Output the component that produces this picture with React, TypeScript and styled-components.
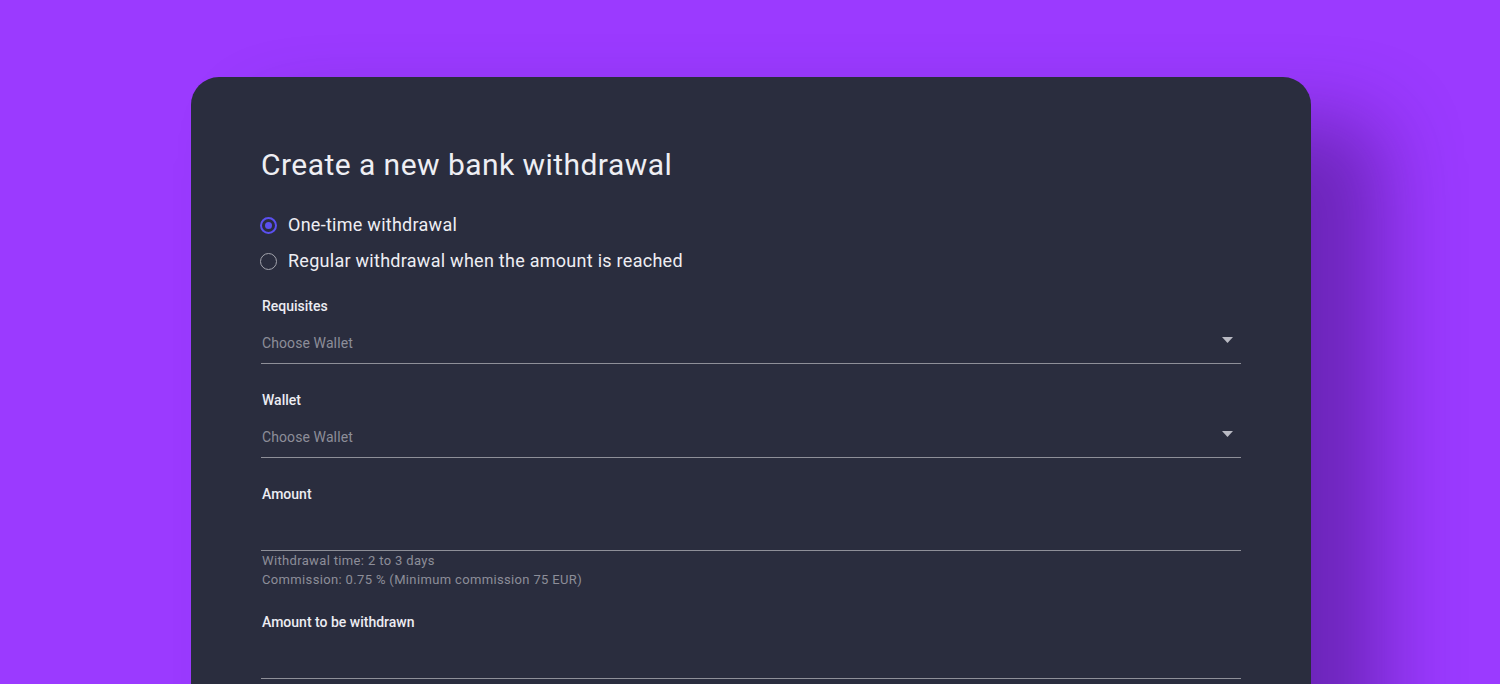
import React, { FC, useState } from "react";
import styled, { createGlobalStyle } from "styled-components";

const GlobalStyle = createGlobalStyle`
  html, body {
    margin: 0;
    padding: 0;
    background: #9b3aff;
  }
  body {
    font-family: Roboto, "Noto Sans", "Liberation Sans", sans-serif;
    -webkit-font-smoothing: antialiased;
  }
  * {
    box-sizing: border-box;
  }
`;

type Option = { id: string; label: string };

const withdrawalTypes: Option[] = [
  { id: "once", label: "One-time withdrawal" },
  { id: "regular", label: "Regular withdrawal when the amount is reached" },
];

const ArrowIcon: FC = () => (
  <svg width="11" height="6" viewBox="0 0 11 6" aria-hidden="true">
    <path d="M0 0h11L5.5 6z" fill="#b9bac3" />
  </svg>
);

const SelectField: FC<{ label: string; placeholder: string }> = ({ label, placeholder }) => (
  <StyledField>
    <StyledLabel>{label}</StyledLabel>
    <StyledSelect>
      <span>{placeholder}</span>
      <ArrowIcon />
    </StyledSelect>
  </StyledField>
);

const InputField: FC<{ label: string; helper?: string[] }> = ({ label, helper }) => (
  <StyledField>
    <StyledLabel>{label}</StyledLabel>
    <StyledInput type="text" />
    {helper && (
      <StyledHelper>
        {helper.map((line) => (
          <div key={line}>{line}</div>
        ))}
      </StyledHelper>
    )}
  </StyledField>
);

const App: FC = () => {
  const [type, setType] = useState("once");

  return (
    <>
      <GlobalStyle />
      <StyledPage>
        <StyledCard>
          <StyledTitle>Create a new bank withdrawal</StyledTitle>

          <StyledRadioGroup>
            {withdrawalTypes.map((option) => (
              <StyledRadioRow key={option.id}>
                <StyledRadio
                  type="radio"
                  name="withdrawal-type"
                  checked={type === option.id}
                  onChange={() => setType(option.id)}
                />
                {option.label}
              </StyledRadioRow>
            ))}
          </StyledRadioGroup>

          <SelectField label="Requisites" placeholder="Choose Wallet" />
          <SelectField label="Wallet" placeholder="Choose Wallet" />
          <InputField
            label="Amount"
            helper={["Withdrawal time: 2 to 3 days", "Commission: 0.75 % (Minimum commission 75 EUR)"]}
          />
          <InputField label="Amount to be withdrawn" />
        </StyledCard>
      </StyledPage>
    </>
  );
};

export default App;

const StyledPage = styled.main`
  height: 684px;
  overflow: hidden;
  padding: 77px 0 0 2px;
`;
const StyledCard = styled.section`
  width: 1120px;
  min-height: 700px;
  margin: 0 auto;
  padding: 70px 70px 0;
  background: #2a2d3e;
  border-radius: 28px;
  box-shadow: 70px 45px 80px rgba(45, 10, 90, 0.42);
`;
const StyledTitle = styled.h2`
  margin: 0;
  font-size: 30px;
  line-height: 36px;
  font-weight: 400;
  letter-spacing: 0.45px;
  color: #eeeef3;
`;
const StyledRadioGroup = styled.div`
  display: flex;
  flex-direction: column;
  gap: 12px;
  margin: 30px 0 23px;
`;
const StyledRadioRow = styled.label`
  display: flex;
  align-items: center;
  font-size: 18px;
  line-height: 24px;
  letter-spacing: 0.27px;
  color: #eeeef3;
  cursor: pointer;
`;
const StyledRadio = styled.input`
  appearance: none;
  width: 17px;
  height: 17px;
  margin: 0 11px 0 -1px;
  border: 1.5px solid #a3a4ad;
  border-radius: 50%;
  display: grid;
  place-items: center;
  cursor: pointer;

  &:checked {
    border: 2px solid #5b50f0;
  }
  &:checked::after {
    content: "";
    width: 7px;
    height: 7px;
    border-radius: 50%;
    background: #5b50f0;
  }
`;
const StyledField = styled.div`
  margin-bottom: 26px;
`;
const StyledLabel = styled.div`
  font-size: 14px;
  line-height: 20px;
  font-weight: 500;
  padding-left: 1px;
  color: #ececf2;
`;
const StyledSelect = styled.div`
  display: flex;
  justify-content: space-between;
  align-items: center;
  padding: 17px 8px 10px 1px;
  font-size: 14px;
  line-height: 20px;
  letter-spacing: 0.1px;
  color: #8d8e99;
  border-bottom: 1px solid #8e8f98;
  cursor: pointer;

  svg {
    margin-top: -6px;
  }
`;
const StyledInput = styled.input`
  display: block;
  width: 100%;
  height: 47px;
  padding: 17px 1px 10px;
  border: none;
  border-bottom: 1px solid #8e8f98;
  background: transparent;
  font: inherit;
  font-size: 14px;
  line-height: 20px;
  color: #f0f0f5;
  outline: none;
`;
const StyledHelper = styled.div`
  margin: 0 0 -3px;
  padding-left: 1px;
  font-size: 13px;
  line-height: 19px;
  letter-spacing: 0.35px;
  color: #8d8e99;
`;
